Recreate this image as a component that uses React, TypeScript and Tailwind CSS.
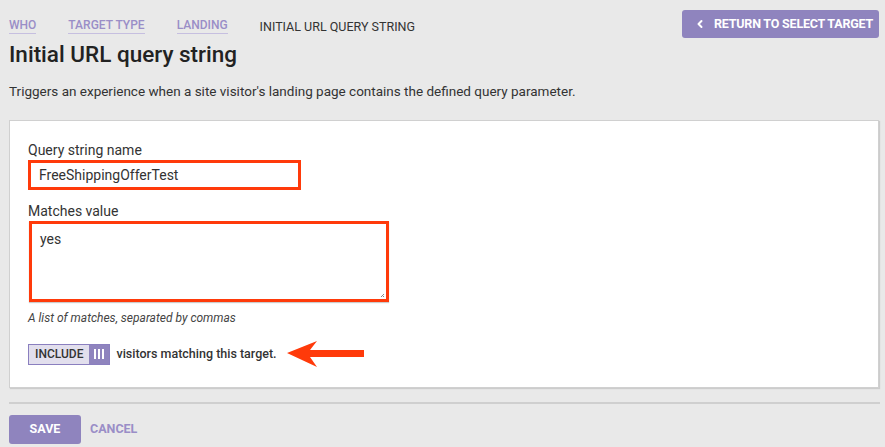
import { ChevronLeft } from "lucide-react"

function App() {
    return (
        <div className="min-h-screen w-[885px] h-[447px] overflow-hidden bg-[#e9e9e9] font-['Roboto',sans-serif] text-[#222]">
            <div className="flex items-start justify-between pl-[9px] pr-[6px] pt-[10px]">
                <nav className="flex items-center gap-[32px] pt-[8px] text-[12px] uppercase">
                    <a className="text-[#9a8ec7] font-medium border-b border-[#c6bfe0] leading-[15px]">Who</a>
                    <a className="text-[#9a8ec7] font-medium border-b border-[#c6bfe0] leading-[15px]">Target type</a>
                    <a className="text-[#9a8ec7] font-medium border-b border-[#c6bfe0] leading-[15px]">Landing</a>
                    <span className="text-[#333] leading-[15px] text-[12.5px]">Initial URL query string</span>
                </nav>
                <button className="flex items-center gap-[8px] h-[28px] w-[197px] whitespace-nowrap rounded-[3px] bg-[#8f84be] pl-[12px] text-[12.5px] font-bold uppercase tracking-[-0.2px] text-white">
                    <ChevronLeft size={12} strokeWidth={4} />
                    Return to select target
                </button>
            </div>

            <h1 className="ml-[9px] mt-[1px] text-[22.5px] font-medium leading-[30px] text-[#222]">Initial URL query string</h1>
            <p className="ml-[9px] mt-[13px] text-[13.5px] leading-[18px] text-[#333]">
                Triggers an experience when a site visitor's landing page contains the defined query parameter.
            </p>

            <div className="ml-[9px] mt-[20px] w-[870px] h-[268px] border border-[#d0d0d0] bg-white shadow-[1px_1px_1px_#ccc] pl-[18px] pt-[20px]">
                <label className="block text-[14px] leading-[18px] text-[#333]">Query string name</label>
                <div className="mt-[1px] w-[273px] h-[30px] border-[3px] border-[#ff3a0a] flex items-center pl-[8px] text-[14px] text-[#333]">
                    FreeShippingOfferTest
                </div>
                <label className="block mt-[12px] text-[14px] leading-[18px] text-[#333]">Matches value</label>
                <div className="mt-[1px] ml-[1px] w-[360px] h-[81px] border-[3px] border-[#ff3a0a] pl-[8px] pt-[5px] text-[14px] text-[#333] relative shadow-[0_1px_1px_#ccc]">
                    yes
                    <svg className="absolute right-[1px] bottom-[1px]" width="5" height="5" viewBox="0 0 5 5">
                        <path d="M4 1 L1 4 M4 3 L3 4" stroke="#888" strokeWidth="1" />
                    </svg>
                </div>
                <p className="mt-[8px] text-[12px] italic leading-[16px] text-[#444]">A list of matches, separated by commas</p>

                <div className="mt-[15px] flex items-center">
                    <div className="flex h-[21px] border border-[#8a7fbf]">
                        <span className="flex items-center bg-[#e2dfed] px-[6px] text-[12px] font-medium uppercase text-[#333]">Include</span>
                        <span className="flex items-center gap-[2px] bg-[#8f84be] px-[5px]">
                            <span className="block h-[10px] w-[2px] bg-white"></span>
                            <span className="block h-[10px] w-[2px] bg-white"></span>
                            <span className="block h-[10px] w-[2px] bg-white"></span>
                        </span>
                    </div>
                    <span className="ml-[6px] text-[12.5px] font-medium text-[#333]">visitors matching this target.</span>
                    <svg className="ml-[10px]" width="77" height="26" viewBox="0 0 77 26">
                        <path d="M0 12 L30 0 L23 9 L77 9 L77 16 L23 16 L30 26 Z" fill="#ff3a0a" />
                    </svg>
                </div>
            </div>

            <div className="ml-[9px] mt-[14px] w-[871px] h-[2px] bg-[#cfcfcf]"></div>

            <div className="ml-[9px] mt-[11px] flex items-center gap-[9px]">
                <button className="h-[29px] w-[72px] rounded-[3px] bg-[#8f84be] text-[12.5px] font-bold uppercase text-white">Save</button>
                <button className="text-[12.5px] font-bold uppercase text-[#9a8ec7]">Cancel</button>
            </div>
        </div>
    )
}

export default App
